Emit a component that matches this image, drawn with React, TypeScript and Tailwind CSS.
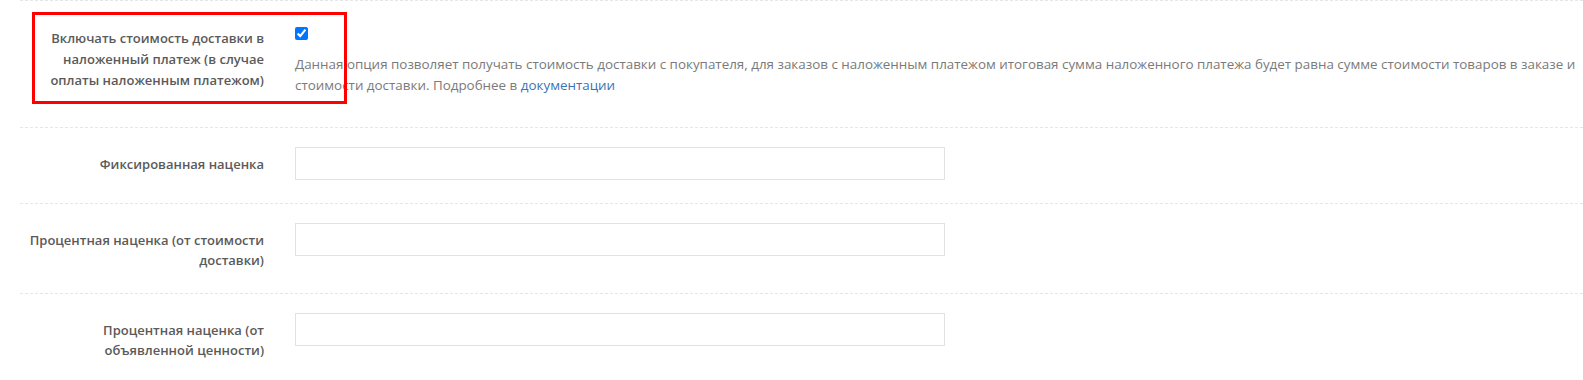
const font = { fontFamily: '"Open Sans", "Noto Sans", sans-serif' }

const rows = [
    { id: 'fixed', label: ['Фиксированная наценка'] },
    { id: 'percent-delivery', label: ['Процентная наценка (от стоимости', 'доставки)'] },
    { id: 'percent-declared', label: ['Процентная наценка (от', 'объявленной ценности)'] },
]

const labelCls =
    'w-[260px] shrink-0 pr-[16px] text-right text-[13px] font-semibold text-[#5a5a5a] whitespace-nowrap'

export default function App() {
    return (
        <div className="relative min-h-screen bg-white pl-[20px]" style={font}>
            <div className="flex border-t border-dashed border-[#e6e6e6] pt-[20px] pb-[31px]">
                <div className={labelCls + ' pt-[7px] leading-[21px]'}>
                    <div>Включать стоимость доставки в</div>
                    <div>наложенный платеж (в случае</div>
                    <div>оплаты наложенным платежом)</div>
                </div>
                <div className="flex-1 pl-[15px]">
                    <div className="pt-[6px]">
                        <input
                            type="checkbox"
                            defaultChecked
                            className="m-0 block h-[13px] w-[13px] accent-[#0075ff]"
                        />
                    </div>
                    <p className="mt-[14px] whitespace-nowrap text-[13.4px] leading-[21px] text-[#7a7a7a]">
                        Данная опция позволяет получать стоимость доставки с покупателя, для заказов с наложенным платежом итоговая сумма наложенного платежа будет равна сумме стоимости товаров в заказе и
                        <br />
                        стоимости доставки. Подробнее в{' '}
                        <a href="#" className="text-[#3a72b8]">
                            документации
                        </a>
                    </p>
                </div>
            </div>
            {rows.map((row) => (
                <div
                    key={row.id}
                    className="flex border-t border-dashed border-[#e6e6e6] pt-[19px] pb-[23px]"
                >
                    <div className={labelCls + ' pt-[7px] leading-[20px]'}>
                        {row.label.map((line) => (
                            <div key={line}>{line}</div>
                        ))}
                    </div>
                    <div className="flex-1 pl-[15px]">
                        <input
                            type="text"
                            className="block h-[33px] w-[650px] border border-[#e2e2e2] bg-white px-3 text-[13px] outline-none"
                        />
                    </div>
                </div>
            ))}
            <div className="pointer-events-none absolute left-[32px] top-[12px] h-[92px] w-[315px] border-[3px] border-[#ff0000]" />
        </div>
    )
}
